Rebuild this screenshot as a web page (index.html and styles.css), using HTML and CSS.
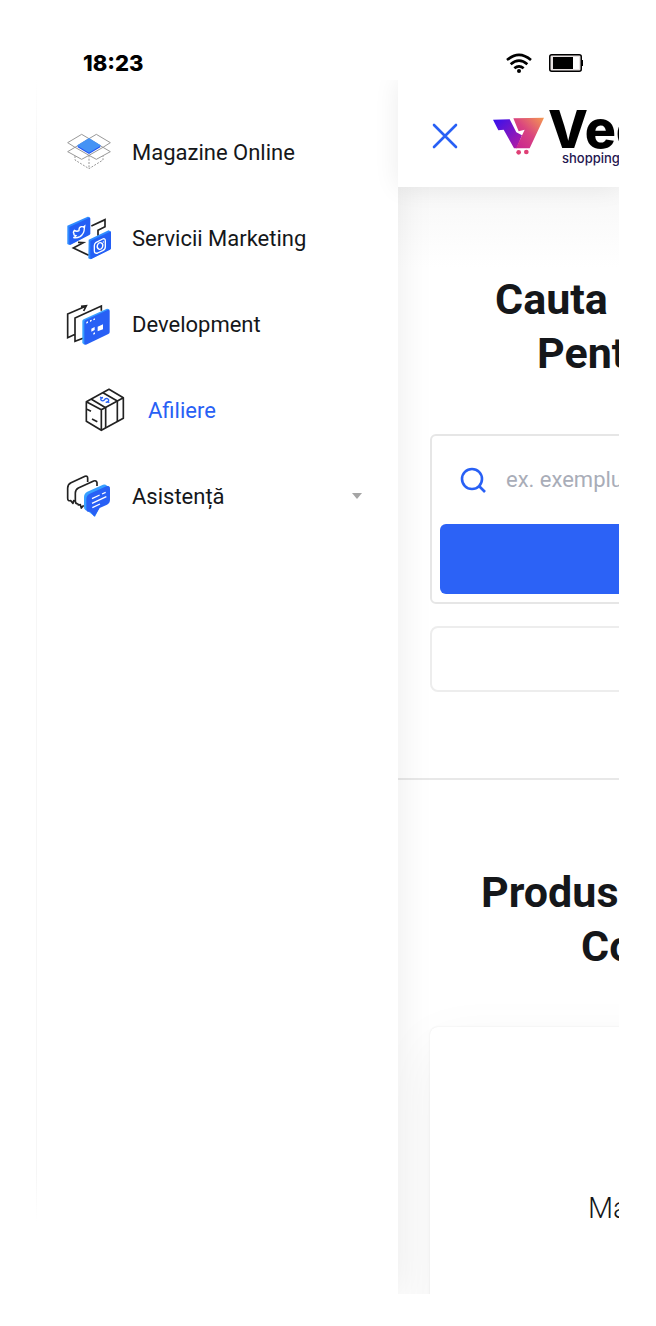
FILE: index.html
```
<!DOCTYPE html>
<html lang="ro">
<head>
  <meta charset="UTF-8" />
  <meta name="viewport" content="width=device-width, initial-scale=1.0" />
  <title>Afiliere</title>
  <link rel="stylesheet" href="styles.css">
</head>
<body>
  <div class="status-bar">
    <span class="time">18:23</span>
    <div class="status-icons">
      <svg width="26" height="20" viewBox="0 0 78 60" fill="none" stroke="#000" stroke-width="8">
        <path d="M3 21q36-31 72 0M14 34q25-22 50 0M25 46q14-12 28 0"/>
        <circle cx="39" cy="54" r="6" fill="#000" stroke="none"/>
      </svg>
      <svg width="34" height="18" viewBox="0 0 34 18">
        <rect x="0.75" y="0.75" width="31.5" height="16.5" rx="2" fill="#e8e2e2" stroke="#000" stroke-width="1.5"/>
        <path d="M24 3h6v12h-6z" fill="#fff"/>
        <path d="M4 3h20v12H4zM32 6h2v6h-2z"/>
      </svg>
    </div>
  </div>

  <div class="app">
    <nav class="drawer">
      <a class="item" href="#magazine">
        <svg class="icon" viewBox="36 30 132 132" fill="none" stroke="#999" stroke-width="3">
          <path d="M35 68l42-25 22 13-42 26zM99 56l22-13 42 25-22 14zM35 95l22-13 42 24-22 12zM99 106l42-24 22 13-42 23z"/>
          <path d="M57 108v12l42 26 42-26v-12M99 106v40" stroke-dasharray="6 4"/>
          <path d="M65 77v5l34 20 34-20v-5z" fill="#1f50f5" stroke="none"/>
          <path d="M99 54l34 21q2 2 0 3l-31 19q-3 2-6 0L65 78q-2-1 0-3z" fill="#4593f5" stroke="none"/>
        </svg>
        Magazine Online
      </a>
      <a class="item" href="#marketing">
        <svg class="icon" viewBox="36 24 132 132" fill="none" stroke="#222" stroke-width="5">
          <path d="M106 54l41-19v21l-21 11v16M66 103l16 1-30 16 46 22"/>
          <path d="M34 53l61-27q6 0 7 4v48l-62 33-6-3z" fill="#2f8cff" stroke="none"/>
          <path d="M40 57l60-28q3 0 3 3v44q0 3-3 5l-56 29q-4 1-4-3z" fill="#245ff5" stroke="none"/>
          <path d="M55 67q7 5 14 1-1-10 7-12 4-1 6 1l4-3-1 7q0 17-13 25-9 5-20 3 6-2 8-6-8-1-6-6-4-4 1-10z" stroke="#fff" stroke-width="4"/>
          <path d="M98 95l60-28 7 4v51l-62 32-6-3z" fill="#2f8cff" stroke="none"/>
          <path d="M103 99l59-28q3-1 3 3v46q0 3-3 5l-56 28q-3 1-3-3z" fill="#245ff5" stroke="none"/>
          <path d="M119 104l21-11q8-3 8 6v17q0 8-8 12l-15 7q-10 3-10-7v-15q0-6 4-9z" stroke="#fff" stroke-width="4"/>
          <ellipse cx="132" cy="114" rx="8" ry="10" transform="rotate(20 132 114)" stroke="#fff" stroke-width="4"/>
          <circle cx="142" cy="102" r="2" fill="#fff" stroke="none"/>
        </svg>
        Servicii Marketing
      </a>
      <a class="item" href="#development">
        <svg class="icon" viewBox="36 24 132 132" fill="none" stroke="#222" stroke-width="5">
          <path d="M59 120l-24 11V60l54-23M75 37l16-2-8 16M81 133l-24 9V72l79-36v14"/>
          <path d="M79 81q0-3 4-5l68-31q4-2 9 3l-70 101-5 3-6-5z" fill="#38a0ff" stroke="none"/>
          <path d="M85 84q0-4 4-6l67-31q5-1 5 4v63q0 4-4 6l-67 32q-5 1-5-4z" fill="#2860f5" stroke="none"/>
          <path d="M91 84l5-2v4l-5 3zM102 79l5-2v4l-5 3zM112 75l5-2v4l-5 2zM125 98l16-7v15l-16 6zM106 104l10-5v9l-10 5zM112 117l5-2v5l-5 2z" fill="#fff" stroke="none"/>
        </svg>
        Development
      </a>
      <a class="item sub active" href="#afiliere">
        <svg class="icon" viewBox="24 24 132 132" fill="none" stroke="#222" stroke-width="5" stroke-linejoin="round">
          <path d="M31 65l68-37 43 25-66 36zM31 65v59l45 27V89M76 151l66-36V53"/>
          <path d="M45 57l44 26v61M81 38l43 25v62M33 88l12 6M48 117l16 8"/>
          <path d="M81 52q-9 2-6 8 5 5 10 0 3-6 9-4 8 4 1 10l-6 1M72 51l8 4M92 64l8 4" stroke="#2860f5" stroke-width="4"/>
        </svg>
        Afiliere
      </a>
      <button class="item" type="button">
        <svg class="icon" viewBox="36 24 132 132" fill="none" stroke="#222" stroke-width="5" stroke-linejoin="round">
          <path d="M60 105l-7-1-2 8-7-8q-9 2-9-7V66q0-11 10-16l42-19q8-3 8 6v11"/>
          <path d="M83 118l-7 8-3-10-6 1-1-3q-8 0-8-8V81q0-10 9-15l46-21q8-3 10 5v10"/>
          <path d="M84 93q0-11 10-16l47-21q7-2 12 3l8 5-44 88-22-17q-11-2-11-12z" fill="#38a0ff" stroke="none"/>
          <path d="M91 99q0-11 10-16l50-22q11-4 11 8v32q0 10-9 15l-22 10-16 26-12-15q-12 3-12-9z" fill="#2860f5" stroke="none"/>
          <path d="M108 98l23-11M108 112l43-20M109 125l23-11M138 84l11-5" stroke="#fff" stroke-width="4"/>
        </svg>
        Asistență
        <svg class="caret" width="10" height="6" viewBox="0 0 10 6"><path d="M0 0h10L5 6z" fill="#a5a5a5"/></svg>
      </button>
    </nav>

    <main class="page">
      <header class="topbar">
        <button class="close" type="button" aria-label="Inchide">
          <svg width="26" height="26" viewBox="0 0 26 26" stroke="#2860f5" stroke-width="2.6" stroke-linecap="round"><path d="M2 2l22 22M24 2L2 24"/></svg>
        </button>
        <a class="logo" href="#home">
          <svg width="52" height="38" viewBox="15 28 156 114">
            <defs>
              <linearGradient id="violet" x1="0" x2="1" y1="0" y2="1">
                <stop offset="0" stop-color="#3510ef"/>
                <stop offset="1" stop-color="#b91ca0"/>
              </linearGradient>
              <linearGradient id="sunset" x1="0" x2="1" y1="1" y2="0">
                <stop offset="0.1" stop-color="#c92790"/>
                <stop offset="0.5" stop-color="#d94380"/>
                <stop offset="1" stop-color="#f59a50"/>
              </linearGradient>
            </defs>
            <path d="M15 36l50-1 20 39 17 9-16 39h-8L47 66l-16 2z" fill="url(#violet)"/>
            <path d="M76 32l92-2-43 92H84l26-56-18 5z" fill="url(#sunset)"/>
            <circle cx="92" cy="134" r="7" fill="#df3f75"/>
            <circle cx="115" cy="133" r="7" fill="#df3f75"/>
          </svg>
          <span class="brand">
            <span class="brand-name">Vec</span>
            <span class="brand-sub">shopping</span>
          </span>
        </a>
      </header>

      <section class="search">
        <h1><span class="line-cauta">Cauta</span><span class="line-pent">Pent</span></h1>
        <form class="search-form">
          <label class="field">
            <svg width="26" height="26" viewBox="0 0 26 26" fill="none" stroke="#2860f5" stroke-width="2.6"><circle cx="12" cy="12" r="10"/><path d="M19 19l6 6"/></svg>
            <input type="text" placeholder="ex. exemplu" aria-label="Cauta">
          </label>
          <button class="submit" type="submit" aria-label="Cauta"></button>
        </form>
        <button class="secondary" type="button" aria-label="Alege"></button>
      </section>

      <section class="products">
        <h2><span class="line-produs">Produs</span><span class="line-co">Co</span></h2>
        <div class="card">
          <p>Ma</p>
        </div>
      </section>
    </main>
  </div>
</body>
</html>
```
FILE: styles.css
```
* {
  box-sizing: border-box;
}

body {
  margin: 0;
  min-height: 100vh;
  padding: 0 37px 32px 36px;
  display: flex;
  flex-direction: column;
  font-family: Roboto, sans-serif;
  font-size: 22px;
  background: #fff;
  color: #15171a;
}

button {
  font: inherit;
  color: inherit;
  background: none;
  border: none;
  padding: 0;
  cursor: pointer;
}

a {
  color: inherit;
  text-decoration: none;
}

svg {
  flex: none;
}

.status-bar {
  height: 80px;
  padding: 45px 36px 0 47px;
  display: flex;
  justify-content: space-between;
  align-items: center;
}

.time {
  font-family: Inter, sans-serif;
  font-weight: 800;
  color: #000;
}

.status-icons {
  display: flex;
  align-items: center;
  gap: 17px;
}

.app {
  flex: 1;
  display: flex;
  overflow: hidden;
}

/* side menu */
.drawer {
  flex: 0 0 362px;
  position: relative;
  z-index: 1;
  padding: 29px 32px;
  display: flex;
  flex-direction: column;
  background: linear-gradient(#fff, #f6f6f6 5%, #f6f6f6 90%, #fff 94%) left / 1px 100% no-repeat #fff;
  box-shadow: 0 0 36px rgba(0, 0, 0, 0.08);
}

.item {
  height: 86px;
  display: flex;
  align-items: center;
  gap: 20px;
  text-align: left;
}

.icon {
  width: 44px;
  height: 44px;
  overflow: visible;
}

.sub {
  padding-left: 16px;
}

.active {
  color: #2860f5;
}

.caret {
  margin-left: auto;
  margin-right: 4px;
}

/* page behind the menu */
.page {
  flex: 1;
  min-width: 0;
  white-space: nowrap;
}

.topbar {
  position: relative;
  z-index: 2;
  height: 107px;
  padding: 4px 0 0 34px;
  display: flex;
  align-items: center;
  gap: 35px;
  background: #fff;
  box-shadow: 0 0 24px rgba(0, 0, 0, 0.08);
}

.close,
.logo {
  display: flex;
}

.logo {
  align-items: center;
  gap: 3px;
}

.brand {
  display: flex;
  flex-direction: column;
  font-family: Inter, sans-serif;
}

.brand-name {
  font-size: 52px;
  line-height: 44px;
  font-weight: 800;
  color: #000;
}

.brand-sub {
  padding-left: 14px;
  font-size: 13px;
  line-height: 12px;
  font-weight: 500;
  color: #231650;
}

.search,
.products {
  padding: 85px 0 86px 32px;
}

.search {
  border-bottom: 2px solid #e8e8e8;
  background: linear-gradient(#f7f7f7, #fff 80px);
}

h1,
h2 {
  margin: 0 0 54px;
  font-size: 43px;
  line-height: 54px;
  font-weight: 700;
}

h1 span,
h2 span {
  display: block;
}

.line-cauta {
  padding-left: 65px;
}

.line-pent {
  padding-left: 107px;
}

.line-produs {
  padding-left: 51px;
}

.line-co {
  padding-left: 151px;
}

.search-form {
  width: 520px;
  padding: 0 8px 8px;
  border: 2px solid #e6e6e6;
  border-radius: 6px;
  background: #fff;
}

.field {
  height: 88px;
  padding-left: 20px;
  display: flex;
  align-items: center;
  gap: 20px;
}

.field input {
  flex: 1;
  border: none;
  outline: none;
  padding: 0 0 2px;
  font: inherit;
  background: none;
}

.field input::placeholder {
  color: #a9adb8;
}

.submit {
  display: block;
  width: 100%;
  height: 70px;
  border-radius: 6px;
  background: #2c62f6;
}

.secondary {
  display: block;
  width: 520px;
  height: 66px;
  margin-top: 22px;
  border: 2px solid #ededed;
  border-radius: 8px;
  background: #fff;
}

.products {
  padding-bottom: 0;
}

.card {
  width: 520px;
  height: 400px;
  margin-bottom: -134px;
  padding: 164px 0 0 158px;
  border-radius: 8px;
  background: #fff;
  box-shadow: 0 0 2px rgba(0, 0, 0, 0.1), 0 20px 60px rgba(0, 0, 0, 0.06);
}

.card p {
  margin: 0;
  font-size: 29px;
  line-height: 34px;
  font-weight: 300;
}
```
